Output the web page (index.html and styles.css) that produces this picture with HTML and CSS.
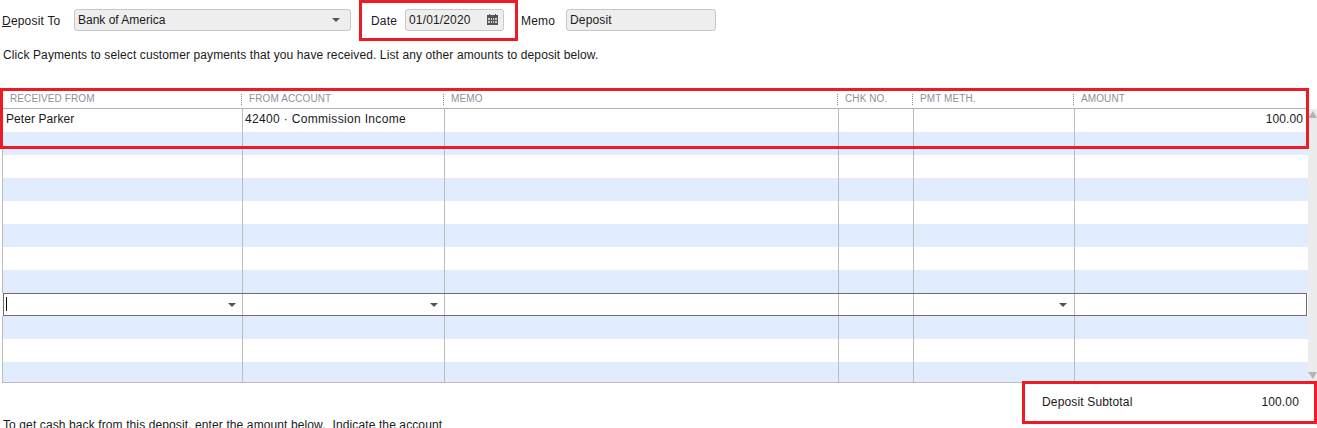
FILE: index.html
```html
<!DOCTYPE html>
<html lang="en">
<head>
<meta charset="utf-8">
<title>Make Deposits</title>
<link rel="stylesheet" href="styles.css">
</head>
<body>
<div class="page">
  <div class="toprow">
    <span class="label label-deposit"><u>D</u>eposit To</span>
    <div class="field field-account"><span>Bank of America</span><i class="caret"></i></div>
    <span class="label label-date">Date</span>
    <div class="field field-date"><span class="spaced">01/01/2020</span>
      <svg class="cal" width="11" height="11" viewBox="0 0 11 11"><path fill="#555" d="M2 0h1v1h5V0h1v1h2v10H0V1h2z"/><path fill="#ccc" d="M1 4h2v2H1zM4 4h1v2H4zM6 4h1v2H6zM8 4h2v2H8zM1 7h2v2H1zM4 7h1v2H4zM6 7h1v2H6zM8 7h2v2H8z"/></svg>
    </div>
    <span class="label label-memo">Memo</span>
    <div class="field field-memo"><span class="spaced">Deposit</span></div>
  </div>
  <p class="hint">Click Payments to select customer payments that you have received. List any other amounts to deposit below.</p>

  <div class="gridwrap">
    <div class="grid">
      <div class="head">
        <div class="hc">RECEIVED FROM</div><div class="hc">FROM ACCOUNT</div><div class="hc">MEMO</div><div class="hc">CHK NO.</div><div class="hc">PMT METH.</div><div class="hc">AMOUNT</div>
      </div>
      <div class="row"><div class="c">Peter Parker</div><div class="c wide">42400 · Commission Income</div><div class="c"></div><div class="c"></div><div class="c"></div><div class="c num">100.00</div></div>
      <div class="row alt"><div class="c"></div><div class="c"></div><div class="c"></div><div class="c"></div><div class="c"></div><div class="c"></div></div>
      <div class="row"><div class="c"></div><div class="c"></div><div class="c"></div><div class="c"></div><div class="c"></div><div class="c"></div></div>
      <div class="row alt"><div class="c"></div><div class="c"></div><div class="c"></div><div class="c"></div><div class="c"></div><div class="c"></div></div>
      <div class="row"><div class="c"></div><div class="c"></div><div class="c"></div><div class="c"></div><div class="c"></div><div class="c"></div></div>
      <div class="row alt"><div class="c"></div><div class="c"></div><div class="c"></div><div class="c"></div><div class="c"></div><div class="c"></div></div>
      <div class="row"><div class="c"></div><div class="c"></div><div class="c"></div><div class="c"></div><div class="c"></div><div class="c"></div></div>
      <div class="row alt"><div class="c"></div><div class="c"></div><div class="c"></div><div class="c"></div><div class="c"></div><div class="c"></div></div>
      <div class="row edit"><div class="c"><b class="cursor"></b><i class="caret"></i></div><div class="c"><i class="caret"></i></div><div class="c"></div><div class="c"></div><div class="c"><i class="caret"></i></div><div class="c"></div></div>
      <div class="row alt"><div class="c"></div><div class="c"></div><div class="c"></div><div class="c"></div><div class="c"></div><div class="c"></div></div>
      <div class="row"><div class="c"></div><div class="c"></div><div class="c"></div><div class="c"></div><div class="c"></div><div class="c"></div></div>
      <div class="row alt last"><div class="c"></div><div class="c"></div><div class="c"></div><div class="c"></div><div class="c"></div><div class="c"></div></div>
    </div>
    <div class="scroll"><i class="sb-up"></i><i class="sb-down"></i></div>
  </div>

  <div class="subtotal"><span class="spaced">Deposit Subtotal</span><span class="spaced">100.00</span></div>
  <p class="cashback">To get cash back from this deposit, enter the amount below.  Indicate the account</p>

  <div class="mark mark-date"></div>
  <div class="mark mark-grid"></div>
  <div class="mark mark-sub"></div>
</div>
</body>
</html>
```
FILE: styles.css
```css
* { box-sizing: border-box; }
html, body { margin: 0; padding: 0; background: #fff; overflow: hidden; }
.page {
  position: relative;
  width: 1317px;
  height: 428px;
  overflow: hidden;
  font: 12px "Liberation Sans", Arial, sans-serif;
  color: #1a1a1a;
}
.spaced { letter-spacing: 0.15px; }
.toprow { display: flex; align-items: center; height: 22px; margin-top: 9px; }
.label { white-space: nowrap; padding-top: 2px; letter-spacing: 0.2px; }
.label-deposit { margin-left: 2px; width: 72px; }
.label-date { margin-left: 20px; width: 34px; }
.label-memo { margin-left: 17px; width: 45px; }
.field {
  display: flex;
  align-items: center;
  justify-content: space-between;
  height: 22px;
  background: #eeeeee;
  border: 1px solid #c8c8c8;
  border-radius: 3px;
  padding: 0 3px 1px 3px;
}
.field-account { width: 277px; padding-right: 10px; }
.field-date { width: 99px; padding-right: 5px; }
.field-memo { width: 150px; }
.caret {
  display: block;
  width: 0;
  height: 0;
  border-left: 4px solid transparent;
  border-right: 4px solid transparent;
  border-top: 4px solid #555;
}
.hint { margin: 17px 0 0 3px; height: 14px; line-height: 14px; white-space: nowrap; letter-spacing: 0.11px; }

.gridwrap { display: flex; align-items: flex-start; margin: 29px 0 0 2px; }
.grid { width: 1306px; border-bottom: 1px solid #bcbcbc; }
.head, .row {
  display: grid;
  grid-template-columns: 240px 202px 394px 75px 161px 234px;
}
.head { height: 18px; border-bottom: 1px solid #b0b0b0; }
.hc {
  position: relative;
  padding: 1px 0 0 7px;
  font-size: 10px;
  line-height: 14px;
  letter-spacing: 0.1px;
  color: #8f8f98;
  white-space: nowrap;
}
.hc:first-child { padding-left: 8px; }
.hc + .hc::before {
  content: "";
  position: absolute;
  left: -1px;
  top: 3px;
  height: 11px;
  border-left: 1px dotted #888;
}
.row { height: 23px; border-left: 1px solid #bcbcbc; }
.alt { background: #e1edfe; }
.c {
  position: relative;
  display: flex;
  align-items: center;
  justify-content: space-between;
  padding: 0 4px 3px 3px;
  border-right: 1px solid #bcbcbc;
  white-space: nowrap;
  line-height: 14px;
  letter-spacing: 0.08px;
}
.c:last-child { border-right: 0; }
.wide { padding-left: 2px; letter-spacing: 0.33px; }
.num { justify-content: flex-end; padding-right: 6px; }
.edit {
  background: #fff;
  margin-left: 1px;
  margin-right: 1px;
  grid-template-columns: 239px 202px 394px 75px 161px 231px;
  border: 1px solid #6e6e6e;
}
.edit .c { padding: 0 6px 0 1px; justify-content: flex-end; height: 21px; }
.edit .c:nth-child(2) { padding-right: 6px; }
.edit .c:nth-child(5) { padding-right: 7px; }
.edit .cursor { position: absolute; left: 2px; top: 3px; width: 1px; height: 14px; background: #000; }
.last { height: 20px; }
.scroll {
  position: relative;
  width: 9px;
  height: 273px;
  margin-top: 18px;
  background: #ececec;
}
.sb-up, .sb-down { position: absolute; left: 0; width: 0; height: 0; border-left: 5px solid transparent; border-right: 4px solid transparent; }
.sb-up { top: 2px; border-bottom: 7px solid #b4b4b4; }
.sb-down { bottom: 3px; border-top: 7px solid #b4b4b4; }

.subtotal {
  display: flex;
  justify-content: space-between;
  width: 257px;
  margin: 12px 0 0 1042px;
  height: 14px;
  line-height: 14px;
  white-space: nowrap;
}
.cashback { margin: 9px 0 0 3px; height: 14px; line-height: 14px; white-space: pre; letter-spacing: 0.11px; }

.mark { position: absolute; border: 3px solid #ed1c24; pointer-events: none; }
.mark-date { left: 359px; top: 0; width: 159px; height: 41px; }
.mark-grid { left: 0; top: 88px; width: 1309px; height: 61px; }
.mark-sub { left: 1022px; top: 381px; width: 295px; height: 43px; }
```
